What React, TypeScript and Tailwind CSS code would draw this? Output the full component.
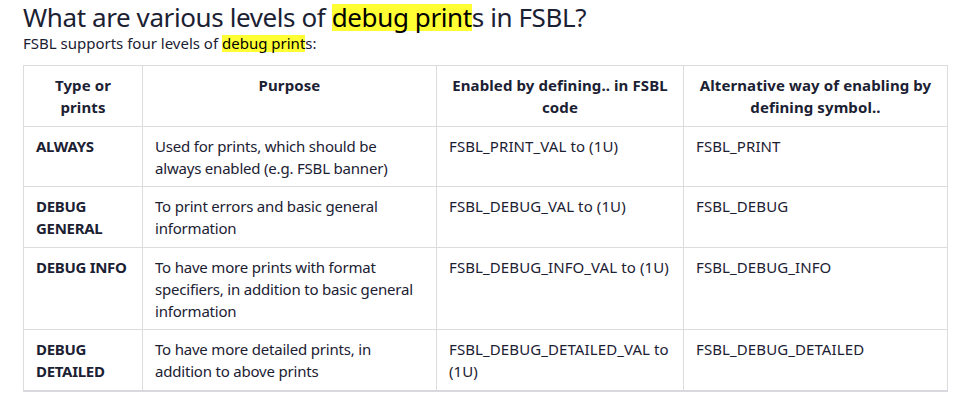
import type { FC } from 'react';

type Row = {
  type: string[];
  purpose: string;
  define: string;
  symbol: string;
};

const rows: Row[] = [
  {
    type: ['ALWAYS'],
    purpose: 'Used for prints, which should be always enabled (e.g. FSBL banner)',
    define: 'FSBL_PRINT_VAL to (1U)',
    symbol: 'FSBL_PRINT',
  },
  {
    type: ['DEBUG', 'GENERAL'],
    purpose: 'To print errors and basic general information',
    define: 'FSBL_DEBUG_VAL to (1U)',
    symbol: 'FSBL_DEBUG',
  },
  {
    type: ['DEBUG INFO'],
    purpose: 'To have more prints with format specifiers, in addition to basic general information',
    define: 'FSBL_DEBUG_INFO_VAL to (1U)',
    symbol: 'FSBL_DEBUG_INFO',
  },
  {
    type: ['DEBUG', 'DETAILED'],
    purpose: 'To have more detailed prints, in addition to above prints',
    define: 'FSBL_DEBUG_DETAILED_VAL to (1U)',
    symbol: 'FSBL_DEBUG_DETAILED',
  },
];

const cell = 'border border-[#dcdcdc] px-3 pt-2 pb-[7.6px] align-top';

const App: FC = () => {
  return (
    <div className="w-[960px] h-[400px] bg-white text-[#1b2133] font-['Noto_Sans',sans-serif] pl-[23px] pt-[2px]">
      <h2 className="text-[26px] leading-[31px] tracking-[-0.4px]">
        What are various levels of{' '}
        <mark className="inline-block leading-[27px] bg-[#ffff33] text-black">debug print</mark>s in FSBL?
      </h2>
      <p className="text-[15px] leading-[20px]">
        FSBL supports four levels of{' '}
        <mark className="inline-block leading-[17px] bg-[#ffff33] text-black">debug print</mark>s:
      </p>

      <table className="mt-[12px] w-[924px] table-fixed border-collapse text-[15px] leading-[22px] tracking-[0.1px] border-b-2 border-b-[#d8d8de]">
        <colgroup>
          <col className="w-[119px]" />
          <col className="w-[294px]" />
          <col className="w-[247px]" />
          <col className="w-[264px]" />
        </colgroup>
        <thead>
          <tr>
            <th className={`${cell} text-center font-bold`}>Type or prints</th>
            <th className={`${cell} text-center font-bold`}>Purpose</th>
            <th className={`${cell} text-center font-bold`}>Enabled by defining.. in FSBL code</th>
            <th className={`${cell} text-center font-bold`}>Alternative way of enabling by defining symbol..</th>
          </tr>
        </thead>
        <tbody>
          {rows.map((r) => (
            <tr key={r.symbol}>
              <td className={`${cell} font-bold tracking-[-0.3px]`}>
                {r.type.map((t) => (
                  <div key={t} className="whitespace-nowrap">{t}</div>
                ))}
              </td>
              <td className={`${cell} tracking-[-0.2px]`}>{r.purpose}</td>
              <td className={cell}>{r.define}</td>
              <td className={cell}>{r.symbol}</td>
            </tr>
          ))}
        </tbody>
      </table>
    </div>
  );
};

export default App;
